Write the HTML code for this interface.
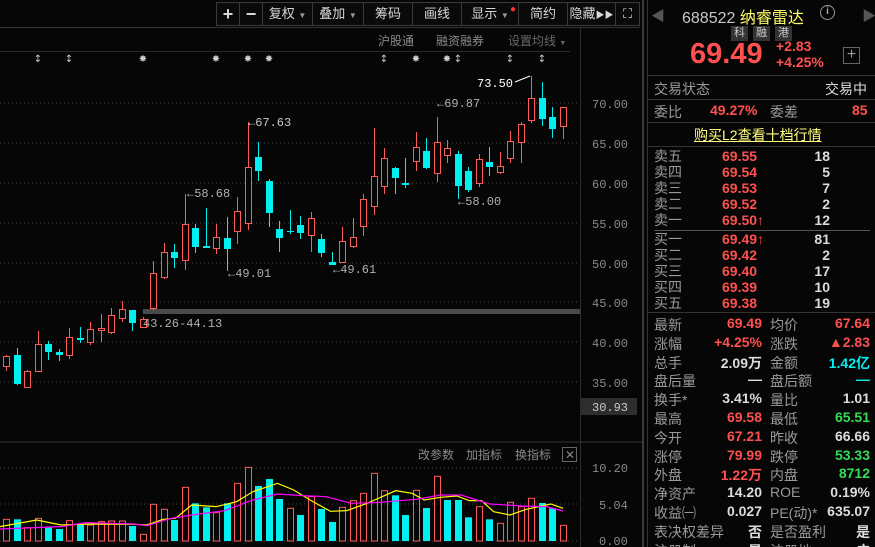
<!DOCTYPE html>
<html><head><meta charset="utf-8"><style>
*{margin:0;padding:0;box-sizing:border-box}
html{width:875px;height:547px;overflow:hidden;background:#060606}
body{width:875px;height:547px;overflow:hidden;background:#060606;font-family:"Liberation Sans","Noto Sans CJK SC",sans-serif;color:#b8b8b8;position:relative}
.a{position:absolute;white-space:nowrap}
.btn{position:absolute;top:2px;height:24px;border:1px solid #3a3a3a;color:#d8d8d8;font-size:13px;line-height:22px;text-align:center;background:#0a0a0a}
.r{color:#ff5050}.c{color:#00f0f0}.g{color:#33dd55}.w{color:#dcdcdc}
.ob{font-size:14px;font-weight:bold}
.lbl{font-size:14px;color:#9a9a9a}
.hl{position:absolute;left:647px;width:228px;height:1px;background:#333}
</style></head><body>
<div class="a" style="left:0;top:27px;width:640px;height:1px;background:#333"></div>
<div class="btn" style="left:216px;width:24px;font-size:18px;font-weight:bold">+</div>
<div class="btn" style="left:239px;width:24px;font-size:18px;font-weight:bold">−</div>
<div class="btn" style="left:262px;width:51px">复权 <span style="font-size:8px;color:#999">▼</span></div>
<div class="btn" style="left:312px;width:52px">叠加 <span style="font-size:8px;color:#999">▼</span></div>
<div class="btn" style="left:363px;width:50px">筹码</div>
<div class="btn" style="left:412px;width:50px">画线</div>
<div class="btn" style="left:461px;width:58px">显示 <span style="font-size:8px;color:#999">▼</span><span style="position:absolute;left:48px;top:-4px;color:#ff3030;font-size:10px">●</span></div>
<div class="btn" style="left:518px;width:50px">简约</div>
<div class="btn" style="left:567px;width:49px">隐藏<span style="font-size:9px">▶▶</span></div>
<div class="btn" style="left:615px;width:25px;font-size:13px">⛶</div>
<div class="a" style="left:378px;top:32px;font-size:12px;color:#8a8a8a">沪股通</div>
<div class="a" style="left:436px;top:32px;font-size:12px;color:#8a8a8a">融资融券</div>
<div class="a" style="left:508px;top:32px;font-size:12px;color:#6a6a6a">设置均线 <span style="font-size:7px">▼</span></div>
<div class="a" style="left:0;top:51px;width:570px;height:1px;background:#2a2a2a"></div>
<div class="a" style="left:580px;top:28px;width:1px;height:519px;background:#2c2c2c"></div>
<div class="a" style="left:642px;top:0;width:2px;height:547px;background:#3a3a3a"></div>
<svg class="a" style="left:0;top:0" width="642" height="547">
<g stroke="#444" stroke-dasharray="1,3">
<line x1="0" y1="103" x2="580" y2="103"/><line x1="0" y1="143" x2="580" y2="143"/><line x1="0" y1="183" x2="580" y2="183"/><line x1="0" y1="223" x2="580" y2="223"/><line x1="0" y1="263" x2="580" y2="263"/><line x1="0" y1="302" x2="580" y2="302"/><line x1="0" y1="342" x2="580" y2="342"/><line x1="0" y1="382" x2="580" y2="382"/>
<line x1="0" y1="468" x2="580" y2="468"/><line x1="0" y1="504" x2="580" y2="504"/><line x1="0" y1="541" x2="580" y2="541"/>
</g>
<rect x="143" y="309" width="437" height="5" fill="#4a4a4a"/>
<line x1="0" y1="442" x2="642" y2="442" stroke="#333"/>
<g id="cd"></g>
<g id="vb"></g>
<g transform="translate(0,430) scale(0.408,0.3333)" fill="none" stroke-width="1.2">
<polyline vector-effect="non-scaling-stroke" stroke="#ffff00" points="0,290 90,270 150,285 230,282 330,283 360,285 400,268 430,265 470,225 530,230 580,215 620,185 680,160 720,180 760,210 810,244 850,242 900,220 970,182 1010,190 1040,210 1080,202 1120,198 1150,212 1180,212 1210,245 1250,255 1290,238 1350,222 1380,235"/>
<polyline vector-effect="non-scaling-stroke" stroke="#ff00ff" points="0,297 150,290 210,278 330,282 360,287 420,265 470,255 550,242 620,210 680,192 740,197 800,200 860,220 920,218 1020,208 1080,195 1130,195 1200,222 1280,228 1340,230 1380,243"/>
</g>
<g font-family="Liberation Mono,monospace" font-size="12" fill="#b0b0b0">
<text x="248" y="126" fill="#c8c8c8">←67.63</text>
<text x="187" y="197">←58.68</text>
<text x="228" y="277">←49.01</text>
<text x="333" y="273">←49.61</text>
<text x="437" y="107">←69.87</text>
<text x="458" y="205">←58.00</text>
<text x="143" y="327">43.26-44.13</text>
<text x="477" y="87" fill="#fff">73.50</text>
</g>
<line x1="515" y1="82" x2="530" y2="76" stroke="#fff"/>
<g font-family="Liberation Mono,monospace" font-size="12" fill="#8a8a8a">
<text x="592" y="108">70.00</text><text x="592" y="148">65.00</text><text x="592" y="188">60.00</text><text x="592" y="228">55.00</text><text x="592" y="268">50.00</text><text x="592" y="307">45.00</text><text x="592" y="347">40.00</text><text x="592" y="387">35.00</text>
<rect x="581" y="398" width="56" height="17" fill="#2e2e2e"/><text x="592" y="411" fill="#ccc">30.93</text>
<text x="592" y="472">10.20</text><text x="599" y="509">5.04</text><text x="599" y="545">0.00</text>
</g>
<g font-size="10" fill="#ccc" font-family="DejaVu Sans,sans-serif" text-anchor="middle">
<text x="38" y="62">↕</text><text x="69" y="62">↕</text><text x="143" y="62">✸</text><text x="216" y="62">✸</text><text x="248" y="62">✸</text><text x="269" y="62">✸</text><text x="384" y="62">↕</text><text x="416" y="62">✸</text><text x="447" y="62">✸</text><text x="458" y="62">↕</text><text x="510" y="62">↕</text><text x="542" y="62">↕</text>
</g>
<g font-size="12" fill="#8a8a8a"><text x="418" y="459">改参数</text><text x="466" y="459">加指标</text><text x="515" y="459">换指标</text></g>
<rect x="562.5" y="447.5" width="14" height="14" fill="none" stroke="#666"/><text x="565" y="459" font-size="12" fill="#888">✕</text>
</svg>
<script>
var C=[[355,371,356,367,1],[348,385,355,384,0],[370,388,371,388,1],[331,372,344,372,1],[341,360,344,352,0],[349,361,352,355,0],[328,359,337,356,1],[327,343,338,340,0],[322,345,329,343,1],[314,342,328,331,1],[308,334,315,333,1],[301,322,309,319,1],[310,331,310,323,0],[317,328,319,328,1],[261,310,273,309,1],[243,279,252,278,1],[244,268,252,258,0],[194,270,224,261,1],[224,253,228,247,0],[208,247,246,248,0],[224,254,237,249,1],[217,271,238,249,0],[197,244,211,232,1],[122,230,167,224,1],[142,181,157,171,0],[179,227,181,213,0],[221,252,229,238,0],[210,234,231,232,0],[216,239,225,233,0],[212,252,218,236,1],[234,257,239,253,0],[252,265,262,265,0],[227,263,241,263,1],[218,248,237,247,1],[194,236,199,227,1],[128,215,176,207,1],[148,194,158,187,1],[167,194,168,178,0],[158,188,183,185,0],[132,171,147,162,1],[138,169,151,168,0],[117,182,142,174,1],[140,163,148,156,1],[151,199,154,186,0],[167,192,171,190,0],[154,187,159,184,1],[147,176,162,167,0],[152,174,166,173,1],[131,163,141,159,1],[122,163,124,143,1],[76,123,98,121,1],[82,126,98,119,0],[107,138,117,129,0],[107,139,107,127,1]];
var V=[[268,1],[268,0],[293,1],[265,1],[290,0],[297,0],[272,1],[285,0],[285,1],[275,1],[273,1],[273,1],[288,0],[313,1],[223,1],[238,1],[270,0],[172,1],[220,0],[232,0],[248,1],[220,0],[160,1],[112,1],[168,0],[147,0],[207,0],[235,1],[255,0],[200,1],[237,0],[276,0],[232,1],[212,1],[190,1],[130,1],[182,1],[196,0],[255,0],[181,1],[234,0],[139,1],[210,0],[210,0],[262,0],[230,1],[268,0],[280,1],[217,1],[230,1],[205,1],[219,0],[235,0],[286,1]];
var ns="http://www.w3.org/2000/svg",cd=document.getElementById('cd'),vb=document.getElementById('vb');
function el(p,t,a){var e=document.createElementNS(ns,t);for(var k in a)e.setAttribute(k,a[k]);p.appendChild(e);}
C.forEach(function(d,i){var x=Math.round(6+10.5*i)+.5,col=d[4]?'#ff5a5a':'#00f0f0';
el(cd,'line',{x1:x,x2:x,y1:d[0],y2:d[1],stroke:col});
var h=Math.max(1,d[3]-d[2]);
if(d[4])el(cd,'rect',{x:x-3,y:d[2]+.5,width:6,height:h-1<1?1:h-1,fill:'#060606',stroke:col});
else el(cd,'rect',{x:x-3.5,y:d[2],width:7,height:h,fill:col});});
V.forEach(function(d,i){var x=Math.round(6+10.5*i)+.5,y=430+d[0]/3,col=d[1]?'#ff5a5a':'#00f0f0';
if(d[1])el(vb,'rect',{x:x-3,y:y,width:6,height:541-y,fill:'none',stroke:col});
else el(vb,'rect',{x:x-3.5,y:y,width:7,height:541-y,fill:col});});
</script>
<div class="a" style="left:647px;top:0;width:1px;height:547px;background:#333"></div>
<div class="a" style="left:651px;top:6px;font-size:14px;color:#555">◀</div>
<div class="a" style="left:862px;top:6px;font-size:14px;color:#555">▶</div>
<div class="a" style="left:682px;top:4px;font-size:16px;color:#c8c8c8">688522 <span style="color:#ffff66">纳睿雷达</span></div>
<div class="a" style="left:820px;top:5px;width:15px;height:15px;border:1.5px solid #999;border-radius:50%;font-size:10px;line-height:12px;text-align:center;color:#aaa;font-weight:bold">i</div>
<div class="a" style="left:731px;top:26px;width:17px;height:15px;background:#333;font-size:11px;text-align:center;line-height:15px;color:#ccc">科</div>
<div class="a" style="left:753px;top:26px;width:17px;height:15px;background:#333;font-size:11px;text-align:center;line-height:15px;color:#ccc">融</div>
<div class="a" style="left:775px;top:26px;width:17px;height:15px;background:#333;font-size:11px;text-align:center;line-height:15px;color:#ccc">港</div>
<div class="a r" style="left:690px;top:38px;font-size:29px;font-weight:bold">69.49</div>
<div class="a r" style="left:776px;top:38px;font-size:14px;font-weight:bold;line-height:16px">+2.83<br>+4.25%</div>
<div class="a" style="left:843px;top:47px;width:17px;height:17px;border:1px solid #666;font-size:16px;line-height:14px;text-align:center;color:#999">+</div>
<div class="hl" style="top:75px"></div>
<div class="a lbl" style="left:654px;top:79px">交易状态</div><div class="a w" style="left:825px;top:79px;font-size:14px">交易中</div>
<div class="hl" style="top:99px"></div>
<div class="a lbl" style="left:654px;top:102px">委比</div><div class="a r ob" style="left:710px;top:102px">49.27%</div><div class="a lbl" style="left:770px;top:102px">委差</div><div class="a r ob" style="left:852px;top:102px">85</div>
<div class="hl" style="top:122px"></div>
<div class="a" style="left:694px;top:125px;font-size:14px;color:#ffff80;text-decoration:underline">购买L2查看十档行情</div>
<div class="hl" style="top:146px"></div>
<div id="ob"></div>
<div class="a" style="left:654px;top:230px;width:216px;height:1px;background:#555"></div>
<div class="hl" style="top:312px"></div>
<div id="st"></div>
<script>
var o=[["卖五","69.55","18"],["卖四","69.54","5"],["卖三","69.53","7"],["卖二","69.52","2"],["卖一","69.50↑","12"],["买一","69.49↑","81"],["买二","69.42","2"],["买三","69.40","17"],["买四","69.39","10"],["买五","69.38","19"]];
var h='';o.forEach(function(r,i){var y=148+i*16+(i>4?3:0);
h+='<div class="a lbl" style="left:654px;top:'+y+'px;line-height:16px">'+r[0]+'</div><div class="a r ob" style="left:722px;top:'+y+'px;line-height:16px">'+r[1]+'</div><div class="a w ob" style="right:45px;top:'+y+'px;line-height:16px">'+r[2]+'</div>';});
document.getElementById('ob').innerHTML=h;
var s=[["最新","69.49","r","均价","67.64","r"],["涨幅","+4.25%","r","涨跌","▲2.83","r"],["总手","2.09万","w","金额","1.42亿","c"],["盘后量","—","w","盘后额","—","c"],["换手*","3.41%","w","量比","1.01","w"],["最高","69.58","r","最低","65.51","g"],["今开","67.21","r","昨收","66.66","w"],["涨停","79.99","r","跌停","53.33","g"],["外盘","1.22万","r","内盘","8712","g"],["净资产","14.20","w","ROE","0.19%","w"],["收益㈠","0.027","w","PE(动)*","635.07","w"],["表决权差异","否","w","是否盈利","是","w"],["注册制","是","w","注册地","广","w"]];
h='';s.forEach(function(r,i){var y=315+i*18.8;
h+='<div class="a lbl" style="left:654px;top:'+y+'px">'+r[0]+'</div><div class="a ob '+r[2]+'" style="right:113px;top:'+y+'px">'+r[1]+'</div><div class="a lbl" style="left:770px;top:'+y+'px">'+r[3]+'</div><div class="a ob '+r[5]+'" style="right:5px;top:'+y+'px">'+r[4]+'</div>';});
document.getElementById('st').innerHTML=h;
</script>
</body></html>
